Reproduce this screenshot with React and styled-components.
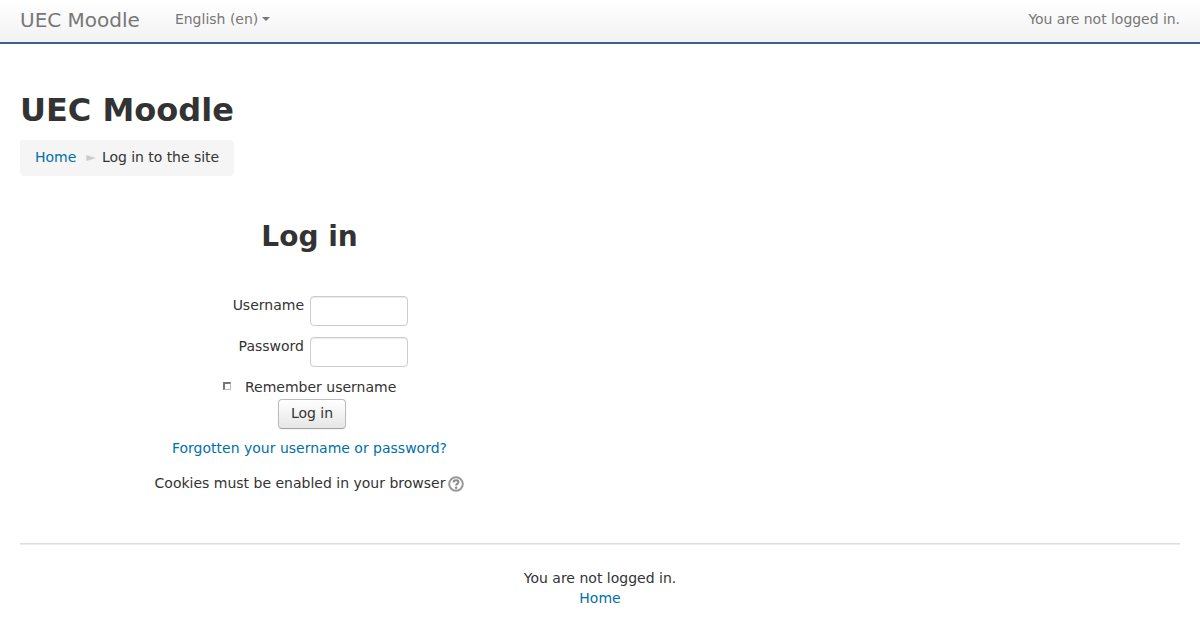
import React from 'react';
import styled, { createGlobalStyle } from 'styled-components';

const GlobalStyle = createGlobalStyle`
  html, body {
    margin: 0;
    padding: 0;
    background: #fff;
    color: #333;
    font-family: "DejaVu Sans", sans-serif;
    font-size: 14px;
    line-height: 20px;
  }
  a {
    color: #0070a8;
    text-decoration: none;
  }
`;

const Navbar = styled.header`
  display: flex;
  align-items: center;
  height: 42px;
  padding: 0 20px;
  background: linear-gradient(to bottom, #ffffff, #f2f2f2);
  border-bottom: 2px solid #3a5f8a;
`;

const Brand = styled.a`
  font-size: 20px;
  color: #777;
  margin-top: -3px;
`;

const LangMenu = styled.a`
  display: flex;
  align-items: center;
  margin-left: 35px;
  margin-top: -5px;
  color: #777;
`;

const Caret = styled.span`
  width: 0;
  height: 0;
  margin-left: 4px;
  margin-top: 1px;
  border-left: 4px solid transparent;
  border-right: 4px solid transparent;
  border-top: 4px solid #777;
`;

const NavLogin = styled.div`
  margin-left: auto;
  margin-top: -5px;
  color: #777;
  letter-spacing: -0.04px;
`;

const Page = styled.div`
  padding: 0 20px;
`;

const PageTitle = styled.h1`
  margin: 0;
  padding-top: 46px;
  font-size: 32px;
  line-height: 40px;
  font-weight: bold;
`;

const Breadcrumb = styled.nav`
  display: inline-flex;
  align-items: center;
  height: 36px;
  margin-top: 10px;
  padding: 0 15px 2px;
  box-sizing: border-box;
  width: 214px;
  background: #f5f5f5;
  border-radius: 4px;
  white-space: nowrap;
`;

const Crumb = styled.span`
  color: #333;
  letter-spacing: -0.05px;
`;

const Sep = styled.span`
  width: 11px;
  margin: 0 5px 0 10px;
  font-size: 12px;
  line-height: 20px;
  color: #ccc;
`;

const LoginPanel = styled.main`
  width: 579px;
  display: flex;
  flex-direction: column;
  align-items: center;
`;

const LoginTitle = styled.h2`
  margin: 41px 0 0;
  font-size: 28px;
  line-height: 40px;
  font-weight: bold;
`;

const LoginForm = styled.form`
  width: 100%;
  margin-top: 39px;
  display: flex;
  flex-direction: column;
`;

const FieldRow = styled.div`
  display: grid;
  grid-template-columns: 284px 98px;
  column-gap: 6px;
  height: 30px;
  margin-bottom: 11px;
`;

const FieldLabel = styled.label`
  margin-top: -1px;
  text-align: right;
  line-height: 20px;
  white-space: nowrap;
`;

const TextInput = styled.input`
  box-sizing: border-box;
  width: 98px;
  height: 30px;
  padding: 4px 6px;
  background: #fff;
  border: 1px solid #ccc;
  border-radius: 4px;
  box-shadow: inset 0 1px 1px rgba(0, 0, 0, 0.075);
`;

const RememberRow = styled.div`
  display: flex;
  align-items: center;
  height: 20px;
  margin-left: 203px;
  margin-top: -1px;
`;

const CheckBox = styled.span`
  box-sizing: border-box;
  width: 8px;
  height: 8px;
  margin-top: -2px;
  border: 2px solid #777;
  border-right: 1px solid #bbb;
  border-bottom: 1px solid #bbb;
  background: #fff;
`;

const RememberLabel = styled.label`
  margin-left: 14px;
`;

const SubmitRow = styled.div`
  display: flex;
  padding-left: 258px;
  margin-top: 2px;
`;

const LoginButton = styled.button`
  box-sizing: border-box;
  width: 68px;
  height: 30px;
  padding: 0 0 2px;
  font: inherit;
  color: #333;
  background: linear-gradient(to bottom, #ffffff, #e6e6e6);
  border: 1px solid #bbb;
  border-bottom-color: #a2a2a2;
  border-radius: 4px;
  box-shadow: inset 0 1px 0 rgba(255, 255, 255, 0.2), 0 1px 2px rgba(0, 0, 0, 0.05);
`;

const CenterLine = styled.div`
  display: flex;
  align-items: center;
  justify-content: center;
  margin-top: ${props => props.$top}px;
  height: 20px;
`;

const HelpIcon = styled.svg`
  width: 16px;
  height: 16px;
  margin-left: 3px;
  margin-top: 1px;
`;

const FooterRule = styled.hr`
  margin: 50px 0 0;
  border: 0;
  border-top: 1px solid #ddd;
  border-bottom: 1px solid #eee;
`;

const Footer = styled.footer`
  margin-top: 23px;
  text-align: center;
`;

const App = () => (
  <>
    <GlobalStyle />
    <Navbar>
      <Brand href="#">UEC Moodle</Brand>
      <LangMenu href="#">
        English ‎(en)‎
        <Caret />
      </LangMenu>
      <NavLogin>You are not logged in.</NavLogin>
    </Navbar>
    <Page>
      <PageTitle>UEC Moodle</PageTitle>
      <Breadcrumb>
        <a href="#">Home</a>
        <Sep>►</Sep>
        <Crumb>Log in to the site</Crumb>
      </Breadcrumb>
      <LoginPanel>
        <LoginTitle>Log in</LoginTitle>
        <LoginForm onSubmit={e => e.preventDefault()}>
          <FieldRow>
            <FieldLabel htmlFor="username">Username</FieldLabel>
            <TextInput id="username" type="text" />
          </FieldRow>
          <FieldRow>
            <FieldLabel htmlFor="password">Password</FieldLabel>
            <TextInput id="password" type="password" />
          </FieldRow>
          <RememberRow>
            <CheckBox />
            <RememberLabel>Remember username</RememberLabel>
          </RememberRow>
          <SubmitRow>
            <LoginButton type="submit">Log in</LoginButton>
          </SubmitRow>
          <CenterLine $top={9}>
            <a href="#">Forgotten your username or password?</a>
          </CenterLine>
          <CenterLine $top={15}>
            Cookies must be enabled in your browser
            <HelpIcon viewBox="0 0 16 16">
              <circle cx="8" cy="8" r="6.8" fill="#fff" stroke="#999" strokeWidth="2" />
              <path
                d="M5.6 6.4c0-1.4 1.1-2.2 2.5-2.2s2.3.8 2.3 2c0 1.7-2.3 1.7-2.3 3.2"
                fill="none"
                stroke="#888"
                strokeWidth="2"
              />
              <circle cx="8.1" cy="11.8" r="1.2" fill="#888" />
            </HelpIcon>
          </CenterLine>
        </LoginForm>
      </LoginPanel>
      <FooterRule />
      <Footer>
        <div>You are not logged in.</div>
        <a href="#">Home</a>
      </Footer>
    </Page>
  </>
);

export default App;
